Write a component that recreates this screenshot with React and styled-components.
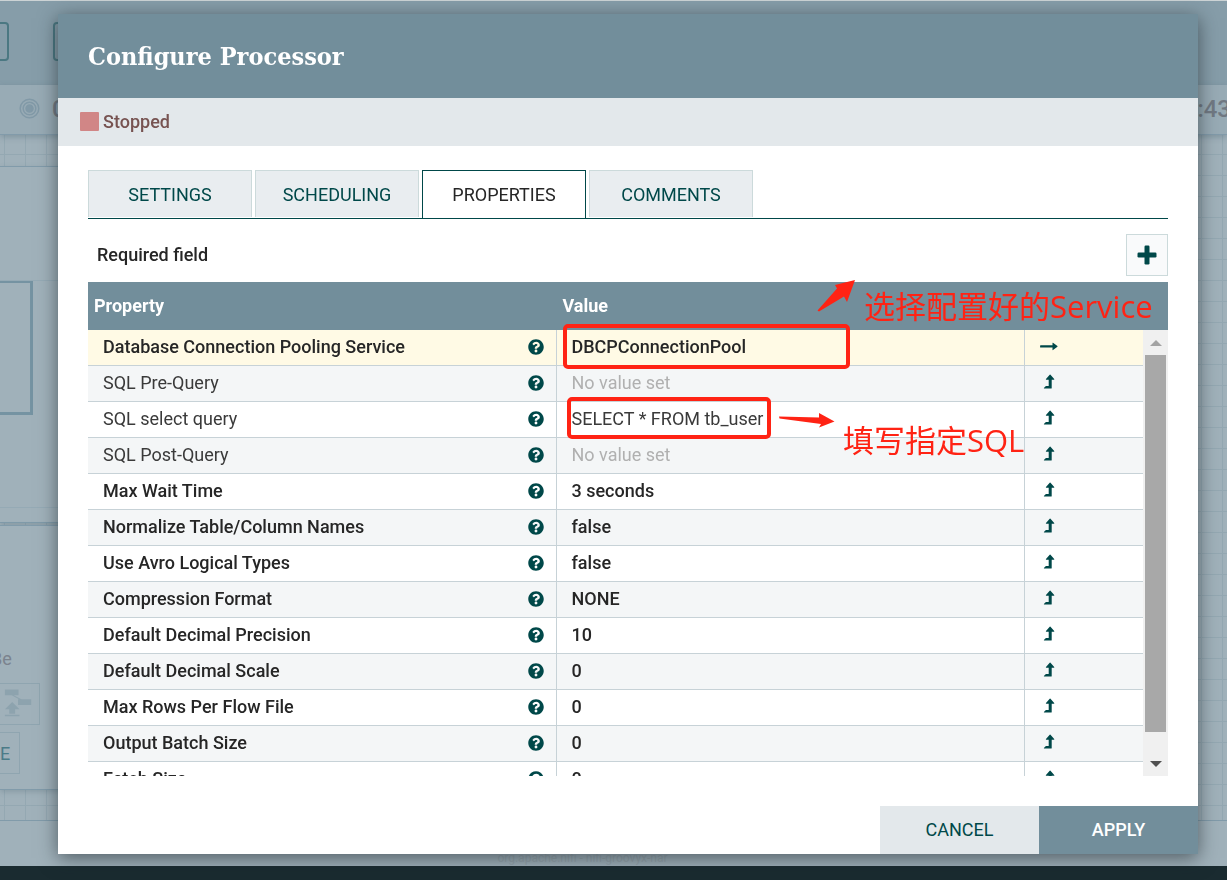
import React from 'react';
import styled, { createGlobalStyle, css } from 'styled-components';
import { FaQuestionCircle } from 'react-icons/fa';

const GlobalStyle = createGlobalStyle`
  * { box-sizing: border-box; }
  html, body { margin: 0; }
  body {
    font-family: Roboto, "Liberation Sans", sans-serif;
    font-size: 18px;
    color: #262626;
    overflow: hidden;
  }
  button { font: inherit; margin: 0; padding: 0; border: 0; cursor: pointer; }
`;

/* ---------- flow canvas behind the dialog ---------- */

const Page = styled.div`
  display: flex;
  flex-direction: column;
  height: 100vh;
  background: #a0b1ba;
  border-top: 1px solid #ccd3d5;
`;

const Toolbar = styled.div`
  display: flex;
  align-items: center;
  gap: 44px;
  height: 84px;
  flex: none;
  padding-bottom: 4px;
  background: #869da9;
`;

const ToolSlot = styled.div`
  width: ${(p) => (p.$cut ? 9 : 40)}px;
  height: 39px;
  border: 2px solid #4b7882;
  border-radius: ${(p) => (p.$cut ? '0 4px 4px 0' : '4px')};
  ${(p) => p.$cut && css`border-left: 0;`}
`;

const FlowStatus = styled.div`
  display: flex;
  align-items: center;
  height: 50px;
  flex: none;
  padding: 0 0 2px 19px;
  background: #98abb5;
  border-bottom: 1px solid #829baa;
  box-shadow: 0 2px 6px rgba(70, 95, 108, 0.35);
  color: #717983;
  font-size: 24px;
  font-weight: 500;
  z-index: 1;
`;

const StatusCount = styled.span`
  margin-left: 12px;
`;

const Clock = styled.span`
  margin-left: auto;
  margin-right: -4px;
  white-space: nowrap;
`;

const Canvas = styled.div`
  flex: 1;
  min-height: 0;
  display: flex;
  flex-direction: column;
  padding: 31px 0 30px;
  background-image: linear-gradient(#94a8b2 1px, transparent 1px),
    linear-gradient(90deg, #94a8b2 1px, transparent 1px);
  background-size: 21px 21px;
  background-position: 4px 19px;
`;

const SidePanel = styled.section`
  width: 300px;
  background: #a0b1ba;
  border-top: 1px solid #819baa;
  border-bottom: 1px solid #819baa;
  box-shadow: 0 2px 5px rgba(70, 95, 108, 0.25);
`;

const Navigate = styled(SidePanel)`
  height: 357px;
  padding-top: 113px;
`;

const Birdseye = styled.div`
  height: 228px;
  border-top: 1px solid #95aab5;
  border-bottom: 1px solid #95aab5;
`;

const Viewport = styled.div`
  width: 33px;
  height: 134px;
  border: 3px solid #7593a2;
  border-top-width: 2px;
  border-left: 0;
`;

const Operate = styled(SidePanel)`
  flex: 1;
  margin-top: 2px;
  padding-top: 123px;
`;

const ComponentType = styled.div`
  height: 34px;
  margin-left: -9px;
  line-height: 20px;
  font-size: 18px;
  color: #7b838e;
`;

const OperateButton = styled.div`
  display: flex;
  align-items: center;
  width: ${(p) => p.$width}px;
  height: 42px;
  margin-bottom: 7px;
  border: 1px solid #8fa5b0;
  border-left: 0;
  color: #4b7b88;
  font-size: 18px;
`;

const Breadcrumbs = styled.div`
  height: 46px;
  flex: none;
  padding-top: 30px;
  border-top: 1px solid #819baa;
  text-align: center;
  padding-right: 62px;
  font-size: 12px;
  line-height: 14px;
  color: #96a5ad;
`;

const Desktop = styled.div`
  height: 14px;
  flex: none;
  background: #1a2b30;
`;

/* ---------- dialog ---------- */

const Overlay = styled.div`
  position: fixed;
  inset: 0;
  z-index: 2;
  display: flex;
  padding: 14px 29px 26px 58px;
`;

const Dialog = styled.div`
  position: relative;
  flex: 1;
  min-width: 0;
  display: flex;
  flex-direction: column;
  background: #fff;
  box-shadow: 0 4px 18px rgba(25, 35, 40, 0.6);
`;

const DialogHeader = styled.header`
  display: flex;
  align-items: center;
  height: 84px;
  flex: none;
  padding: 2px 30px 0;
  background: #728e9b;
`;

const Title = styled.h1`
  margin: 0;
  color: #fff;
  font-family: "Roboto Slab", "DejaVu Serif Condensed", "DejaVu Serif", serif;
  font-size: 25px;
  line-height: 36px;
  font-weight: 700;
`;

const RunState = styled.div`
  display: flex;
  align-items: center;
  gap: 4px;
  height: 48px;
  flex: none;
  padding: 0 22px 2px;
  background: #e3e8eb;
  color: #775351;
  font-weight: 500;
`;

const StopMark = styled.span`
  width: 19px;
  height: 19px;
  border-radius: 1px;
  background: #d18686;
`;

const DialogBody = styled.div`
  flex: 1;
  min-height: 0;
  display: flex;
  flex-direction: column;
  padding: 24px 30px 30px;
`;

const Tabs = styled.div`
  display: flex;
  gap: 3px;
  height: 49px;
  flex: none;
  border-bottom: 1px solid #004849;
`;

const Tab = styled.button`
  width: 164px;
  height: 47px;
  border: 1px solid #ccdadb;
  border-bottom: 0;
  background: #e9edf0;
  color: #004849;
  ${(p) =>
    p.$active &&
    css`
      height: 48px;
      padding-bottom: 1px;
      border-color: #004849;
      background: #fff;
      color: #262626;
    `}
`;

const FieldBar = styled.div`
  display: flex;
  align-items: center;
  justify-content: space-between;
  height: 42px;
  flex: none;
  margin: 15px 0 6px;
  padding-left: 9px;
  font-weight: 500;
`;

const FieldLabel = styled.span`
  padding-bottom: 2px;
`;

const AddButton = styled.button`
  display: grid;
  place-items: center;
  width: 42px;
  height: 42px;
  border: 1px solid #ccdadb;
  background: #f9fafb;
`;

const Grid = styled.div`
  position: relative;
  flex: 1;
  min-height: 0;
  overflow: hidden;
`;

const Table = styled.table`
  width: 100%;
  table-layout: fixed;
  border-collapse: separate;
  border-spacing: 0;
`;

const ActionCol = styled.col`
  width: 143px;
`;

const HeadCell = styled.th`
  height: 48px;
  padding: 0 6px 2px;
  background: #728e9b;
  color: #fff;
  font-weight: 700;
  text-align: left;
`;

const Row = styled.tr`
  background: ${(p) => (p.$selected ? '#fffae5' : p.$even ? '#f4f6f7' : '#fff')};
`;

const Cell = styled.td`
  height: 36px;
  padding: 0 12px 2px 15px;
  border-right: 1px solid #c7d2d7;
  border-bottom: 1px solid #c7d2d7;
  font-weight: ${(p) => (p.$required ? 500 : 400)};
  line-height: 24px;
  white-space: nowrap;
  color: ${(p) => (p.$unset ? '#b0b0b0' : p.$required ? '#262626' : '#3a3a3a')};
`;

const ActionCell = styled(Cell)`
  border-right: 0;
`;

const NameLine = styled.div`
  display: flex;
  align-items: center;
  justify-content: space-between;
`;

const IconButton = styled.button`
  display: block;
  height: 18px;
  background: none;
  color: #004849;
  svg { display: block; }
`;

const Scrollbar = styled.div`
  position: absolute;
  top: 48px;
  right: 0;
  bottom: 0;
  width: 25px;
  display: flex;
  flex-direction: column;
  align-items: center;
  background: #f0f0f0;
`;

const ScrollArrow = styled.div`
  display: grid;
  place-items: center;
  height: 25px;
  flex: none;
`;

const Thumb = styled.div`
  width: 21px;
  flex: 1;
  margin-bottom: 19px;
  background: #a8a8a8;
`;

const Actions = styled.footer`
  display: flex;
  justify-content: flex-end;
  height: 48px;
  flex: none;
`;

const ActionButton = styled.button`
  width: 159px;
  padding-bottom: 2px;
  background: ${(p) => (p.$primary ? '#728e9b' : '#e3e8eb')};
  color: ${(p) => (p.$primary ? '#fff' : '#004849')};
  font-weight: ${(p) => (p.$primary ? 500 : 400)};
`;

/* ---------- red notes drawn over the dialog ---------- */

const Frame = styled.div`
  position: absolute;
  left: ${(p) => p.$x}px;
  top: ${(p) => p.$y}px;
  width: ${(p) => p.$w}px;
  height: ${(p) => p.$h}px;
  border: 4px solid #ff2314;
  border-radius: 5px;
  pointer-events: none;
`;

const Note = styled.div`
  position: absolute;
  left: ${(p) => p.$x}px;
  top: ${(p) => p.$y}px;
  color: #ff2314;
  font-family: "Open Sans", "Noto Sans CJK SC", sans-serif;
  font-size: 31px;
  line-height: 40px;
  white-space: nowrap;
  pointer-events: none;
`;

const Arrow = styled.svg`
  position: absolute;
  left: ${(p) => p.$x}px;
  top: ${(p) => p.$y}px;
  fill: #ff2314;
  pointer-events: none;
`;

const properties = [
  { name: 'Database Connection Pooling Service', value: 'DBCPConnectionPool', required: true, link: true },
  { name: 'SQL Pre-Query' },
  { name: 'SQL select query', value: 'SELECT * FROM tb_user' },
  { name: 'SQL Post-Query' },
  { name: 'Max Wait Time', value: '3 seconds', required: true },
  { name: 'Normalize Table/Column Names', value: 'false', required: true },
  { name: 'Use Avro Logical Types', value: 'false', required: true },
  { name: 'Compression Format', value: 'NONE', required: true },
  { name: 'Default Decimal Precision', value: '10', required: true },
  { name: 'Default Decimal Scale', value: '0', required: true },
  { name: 'Max Rows Per Flow File', value: '0', required: true },
  { name: 'Output Batch Size', value: '0', required: true },
  { name: 'Fetch Size', value: '0', required: true },
];

const GoToIcon = () => (
  <svg width="18" height="18" viewBox="0 0 18 18" fill="currentColor">
    <path d="M.5 7.300h12V5q0-.6.5-.2l4.400 3.300q.4.300 0 .6L13 12q-.5.400-.5-.2V9.600H.5q-.4 0-.4-.4V7.700q0-.4.400-.4z" />
  </svg>
);

const LevelUpIcon = () => (
  <svg width="18" height="18" viewBox="0 0 18 18" fill="currentColor">
    <path d="M9.700.7q.4-.4.800 0l3.700 4.300q.5.700-.3.700h-2.200V14q0 .5-.5.500H4.100q-.4 0-.2-.4l1.700-1.900q.2-.2.500-.2h2.600V5.700H6.300q-.8 0-.3-.7z" />
  </svg>
);

const RingsIcon = () => (
  <svg width="21" height="21" viewBox="0 0 21 21" fill="none" stroke="#8199a7" strokeWidth="1.500">
    <circle cx="10.500" cy="10.500" r="9.300" />
    <circle cx="10.500" cy="10.500" r="6.300" />
    <circle cx="10.500" cy="10.500" r="3.500" fill="#8199a7" />
  </svg>
);

const TemplateIcon = () => (
  <svg width="40" height="40" viewBox="0 0 40 40" fill="#8da3ae">
    <path d="M5 5h14v6H5zM18.500 15H32v6H18.500zM14 11l8 4h-2.500L12 11zM12.500 18l7.500 7.500h-4.500V30h-6v-4.500H5zM5 31h15v1.500H5z" />
  </svg>
);

export default function App() {
  return (
    <>
      <GlobalStyle />
      <Page>
        <Toolbar>
          <ToolSlot $cut />
          <ToolSlot />
        </Toolbar>
        <FlowStatus>
          <RingsIcon />
          <StatusCount>0</StatusCount>
          <Clock>17:43</Clock>
        </FlowStatus>
        <Canvas>
          <Navigate>
            <Birdseye>
              <Viewport />
            </Birdseye>
          </Navigate>
          <Operate>
            <ComponentType>Be</ComponentType>
            <OperateButton $width={40}>
              <TemplateIcon />
            </OperateButton>
            <OperateButton $width={20}>E</OperateButton>
          </Operate>
        </Canvas>
        <Breadcrumbs>org.apache.nifi - nifi-groovyx-nar</Breadcrumbs>
        <Desktop />
      </Page>

      <Overlay>
        <Dialog role="dialog" aria-labelledby="dialog-title">
          <DialogHeader>
            <Title id="dialog-title">Configure Processor</Title>
          </DialogHeader>
          <RunState>
            <StopMark />
            Stopped
          </RunState>
          <DialogBody>
            <Tabs role="tablist">
              {['SETTINGS', 'SCHEDULING', 'PROPERTIES', 'COMMENTS'].map((name) => (
                <Tab key={name} role="tab" aria-selected={name === 'PROPERTIES'} $active={name === 'PROPERTIES'}>
                  {name}
                </Tab>
              ))}
            </Tabs>
            <FieldBar>
              <FieldLabel>Required field</FieldLabel>
              <AddButton aria-label="New property">
                <svg width="20" height="20" viewBox="0 0 20 20" fill="#004849">
                  <rect x="0.500" y="7.500" width="19" height="5" rx="1.200" />
                  <rect x="7.500" y="0.500" width="5" height="19" rx="1.200" />
                </svg>
              </AddButton>
            </FieldBar>
            <Grid>
              <Table>
                <colgroup>
                  <col />
                  <col />
                  <ActionCol />
                </colgroup>
                <thead>
                  <tr>
                    <HeadCell>Property</HeadCell>
                    <HeadCell>Value</HeadCell>
                    <HeadCell aria-label="Actions" />
                  </tr>
                </thead>
                <tbody>
                  {properties.map((p, i) => (
                    <Row key={p.name} $selected={i === 0} $even={i % 2 === 1}>
                      <Cell $required={p.required}>
                        <NameLine>
                          {p.name}
                          <IconButton aria-label={`About ${p.name}`}>
                            <FaQuestionCircle size={16} />
                          </IconButton>
                        </NameLine>
                      </Cell>
                      <Cell $required={p.required} $unset={!p.value}>
                        {p.value || 'No value set'}
                      </Cell>
                      <ActionCell>
                        <IconButton aria-label={p.link ? 'Go to service' : 'Convert to parameter'}>
                          {p.link ? <GoToIcon /> : <LevelUpIcon />}
                        </IconButton>
                      </ActionCell>
                    </Row>
                  ))}
                </tbody>
              </Table>
              <Scrollbar>
                <ScrollArrow>
                  <svg width="12" height="6" viewBox="0 0 12 6" fill="#a3a3a3">
                    <path d="M0 6L6 0l6 6z" />
                  </svg>
                </ScrollArrow>
                <Thumb />
                <ScrollArrow>
                  <svg width="12" height="6" viewBox="0 0 12 6" fill="#505050">
                    <path d="M0 0l6 6 6-6z" />
                  </svg>
                </ScrollArrow>
              </Scrollbar>
            </Grid>
          </DialogBody>
          <Actions>
            <ActionButton>CANCEL</ActionButton>
            <ActionButton $primary>APPLY</ActionButton>
          </Actions>

          <Frame $x={505} $y={310} $w={287} $h={45} />
          <Frame $x={509} $y={383} $w={204} $h={42} />
          <Arrow $x={758} $y={264} width="42" height="36" viewBox="0 0 42 36">
            <path d="M1.500 32.500L21 10.500l-2-3.500L39 2l-8 22-3-5.500L3 33.500z" />
          </Arrow>
          <Arrow $x={720} $y={396} width="58" height="22" viewBox="0 0 58 22">
            <path d="M1 6.500l40 1 0-4.500L56.500 11.500 41 17.500l2-3.500L1.500 8.500z" />
          </Arrow>
          <Note $x={806} $y={272}>选择配置好的Service</Note>
          <Note $x={785} $y={406}>填写指定SQL</Note>
        </Dialog>
      </Overlay>
    </>
  );
}
